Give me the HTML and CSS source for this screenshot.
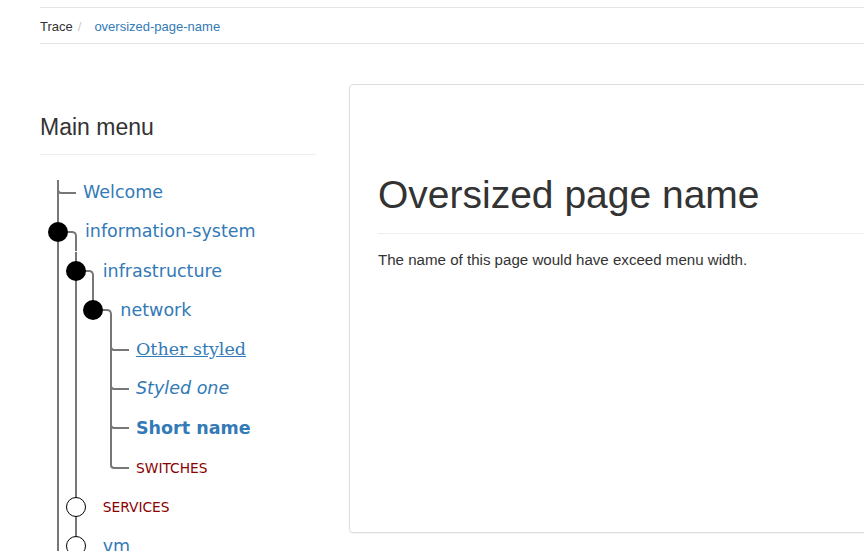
FILE: index.html
```html
<!DOCTYPE html>
<html lang="en">
<head>
<meta charset="utf-8">
<title>Oversized page name</title>
<link rel="stylesheet" href="styles.css">
</head>
<body>
<div class="page">
  <nav class="crumbs">
    <span class="crumb">Trace</span>
    <span class="sep">/</span>
    <a class="crumb-link" href="#">oversized-page-name</a>
  </nav>
  <div class="layout">
    <aside class="sidebar">
      <h3 class="menu-title">Main menu</h3>
      <ul class="tree">
        <li class="leaf first"><a class="label" href="#">Welcome</a></li>
        <li class="node open"><a class="label" href="#">information-system</a>
          <ul>
            <li class="node open"><a class="label" href="#">infrastructure</a>
              <ul>
                <li class="node open last"><a class="label" href="#">network</a>
                  <ul>
                    <li class="leaf"><a class="label serif" href="#">Other styled</a></li>
                    <li class="leaf"><a class="label italic" href="#">Styled one</a></li>
                    <li class="leaf"><a class="label bold" href="#">Short name</a></li>
                    <li class="leaf last"><span class="label red"><span class="caps">SWITCHES</span></span></li>
                  </ul>
                </li>
              </ul>
            </li>
            <li class="node closed"><span class="label red"><span class="caps">SERVICES</span></span></li>
            <li class="node closed"><a class="label" href="#">vm</a></li>
            <li class="node closed last"><a class="label" href="#">storage</a></li>
          </ul>
        </li>
        <li class="leaf last"><a class="label" href="#">Contact</a></li>
      </ul>
    </aside>
    <main class="card">
      <h1 class="page-title">Oversized page name</h1>
      <p class="page-text">The name of this page would have exceed menu width.</p>
    </main>
  </div>
</div>
</body>
</html>
```

FILE: styles.css
```css
html {
  overflow: hidden;
}
body {
  margin: 0;
  background: #fff;
  color: #333;
  font-family: "Liberation Sans", Arial, sans-serif;
}
.page {
  width: 1100px;
  padding-left: 40px;
}

/* breadcrumb */
.crumbs {
  margin-top: 7px;
  height: 37px;
  box-sizing: border-box;
  padding-top: 2px;
  border-top: 1px solid #e5e5e5;
  border-bottom: 1px solid #e5e5e5;
  display: flex;
  align-items: center;
  font-size: 13px;
}
.crumb {
  color: #333;
}
.sep {
  color: #ccc;
  margin-left: 5px;
}
.crumb-link {
  color: #337ab7;
  text-decoration: none;
  margin-left: 13px;
}

/* layout */
.layout {
  display: flex;
  align-items: flex-start;
  gap: 33px;
}
.sidebar {
  width: 276px;
  flex: none;
  padding-top: 70.5px;
}
.menu-title {
  margin: 0;
  font-size: 23px;
  font-weight: normal;
  line-height: 25px;
  padding-bottom: 14.5px;
  border-bottom: 1px solid #eee;
  color: #333;
}

/* tree */
.tree,
.tree ul {
  list-style: none;
  margin: 0;
  padding: 0;
}
.tree {
  margin-top: 17.85px;
  padding-left: 17px;
  font-family: "DejaVu Sans", sans-serif;
  font-size: 17.5px;
}
.tree ul {
  margin-left: -10.33px;
}
.tree li {
  position: relative;
  padding-left: 26px;
}
.tree li.node {
  padding-left: 28px;
}
.tree li::before {
  content: "";
  position: absolute;
  left: 0;
  top: 0;
  bottom: 0;
  width: 2px;
  background: #777;
}
.tree li.first::before {
  top: 7px;
}
.tree li.leaf.last::before {
  bottom: auto;
  height: 15.67px;
}
.tree li.node.last::before {
  bottom: auto;
  height: 19.67px;
}
.label {
  display: block;
  height: 39.33px;
  line-height: 39.33px;
  white-space: nowrap;
  color: #337ab7;
  text-decoration: none;
}
.leaf > .label::after {
  content: "";
  position: absolute;
  left: 0;
  top: 15.67px;
  width: 19px;
  height: 5px;
  box-sizing: border-box;
  border-left: 2px solid #777;
  border-bottom: 2px solid #777;
  border-bottom-left-radius: 4px;
}
.node > .label::after {
  content: "";
  position: absolute;
  left: -9px;
  top: 9.67px;
  width: 20px;
  height: 20px;
  box-sizing: border-box;
  border-radius: 50%;
  background: #000;
  z-index: 2;
}
.node.closed > .label::after {
  background: #fff;
  border: 1.5px solid #000;
}
.node.open > .label::before {
  content: "";
  position: absolute;
  left: 1px;
  top: 18.67px;
  width: 18.67px;
  height: 20.67px;
  box-sizing: border-box;
  border-top: 2px solid #777;
  border-right: 2px solid #777;
  border-top-right-radius: 5px;
  z-index: 1;
}
.serif {
  font-family: "DejaVu Serif", serif;
  text-decoration: underline;
}
.italic {
  font-style: italic;
}
.bold {
  font-weight: bold;
}
.red {
  color: #8b0000;
}
.caps {
  font-size: 13.8px;
}

/* card */
.card {
  flex: 1;
  margin-top: 40px;
  height: 449px;
  box-sizing: border-box;
  border: 1px solid #ddd;
  border-radius: 4px;
  box-shadow: 0 1px 1px rgba(0, 0, 0, 0.05);
  padding: 0 28px;
}
.page-title {
  margin: 88.5px 0 0;
  font-size: 39px;
  font-weight: normal;
  line-height: 1.1;
  padding-bottom: 16.5px;
  border-bottom: 1px solid #eee;
  color: #333;
}
.page-text {
  margin: 15.5px 0 0;
  font-size: 15.1px;
  line-height: 21px;
  color: #333;
}
```
